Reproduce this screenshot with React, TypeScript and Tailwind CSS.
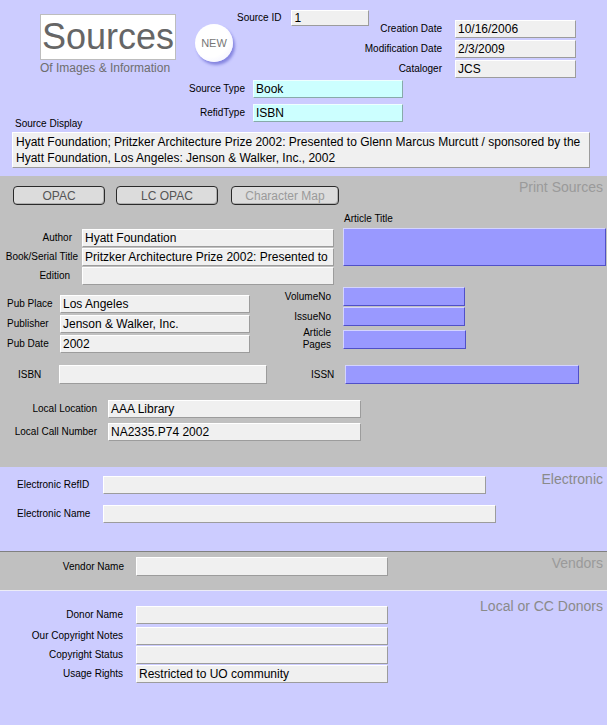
import React from "react";

type Tone = "gray" | "cyan" | "blue";

const toneClass: Record<Tone, string> = {
  gray: "bg-[#f0f0f0] border-t-white border-l-white border-b-[#9c9c9c] border-r-[#9c9c9c]",
  cyan: "bg-[#ccffff] border-t-[#eeffff] border-l-[#eeffff] border-b-[#88aaaa] border-r-[#88aaaa]",
  blue: "bg-[#9999ff] border-t-[#d4d4ff] border-l-[#d4d4ff] border-b-[#5050c8] border-r-[#5050c8]",
};

const Field: React.FC<{ w: string; h?: string; tone?: Tone; value?: string; className?: string }> = ({
  w,
  h = "h-[18px]",
  tone = "gray",
  value,
  className = "",
}) => (
  <div
    className={`${w} ${h} ${toneClass[tone]} border shrink-0 flex items-center px-[2px] text-[12px] leading-none text-black whitespace-nowrap overflow-hidden ${className}`}
  >
    {value}
  </div>
);

const Label: React.FC<{ className?: string; children: React.ReactNode }> = ({ className = "", children }) => (
  <div className={`text-[10px] leading-[12px] text-black whitespace-nowrap shrink-0 ${className}`}>{children}</div>
);

const Button: React.FC<{ w: string; muted?: boolean; children: React.ReactNode }> = ({ w, muted, children }) => (
  <div
    className={`${w} h-[19px] shrink-0 bg-[#dcdcdc] border border-[#2a2a2a] rounded-[4px] shadow-[inset_-1px_-1px_0_#b0b0b0] flex items-center justify-center text-[12px] leading-none ${
      muted ? "text-[#9a9a9a]" : "text-[#555]"
    }`}
  >
    {children}
  </div>
);

const SectionTitle: React.FC<{ className?: string; children: React.ReactNode }> = ({ className = "", children }) => (
  <div className={`ml-auto pr-[4px] text-[14px] leading-[16px] whitespace-nowrap ${className}`}>{children}</div>
);

export default function App() {
  return (
    <div className="w-[607px] h-[725px] flex flex-col bg-[#ccccff] font-['Liberation_Sans',Arial,sans-serif] overflow-hidden">
      {/* header */}
      <div className="h-[176px] shrink-0">
        <div className="h-[80px] flex items-start">
          <div className="w-[176px] pl-[40px] pt-[14px] shrink-0">
            <div className="w-[136px] h-[46px] bg-white border border-[#bdbdbd] flex items-center justify-center text-[36px] leading-none text-[#666]">
              Sources
            </div>
            <div className="mt-[1px] text-[12px] leading-[14px] text-[#6e6e6e] whitespace-nowrap">
              Of Images &amp; Information
            </div>
          </div>
          <div className="ml-[19px] mt-[24px] w-[38px] h-[38px] shrink-0 rounded-full bg-[radial-gradient(circle_at_40%_40%,#ffffff_55%,#ececff_100%)] shadow-[2px_3px_3px_#8585e0] flex items-center justify-center text-[11px] text-[#777]">
            NEW
          </div>
          <div className="flex-1 flex flex-col">
            <div className="flex items-start justify-between">
              <div className="ml-[4px] mt-[10px] flex items-center">
                <Label>Source ID</Label>
                <Field w="w-[78px]" h="h-[16px]" value="1" className="ml-[10px]" />
              </div>
              <div className="mt-[20px] mr-[31px] flex items-center">
                <Label>Creation Date</Label>
                <Field w="w-[121px]" value="10/16/2006" className="ml-[13px]" />
              </div>
            </div>
            <div className="self-end mr-[31px] mt-[2px] flex items-center">
              <Label>Modification Date</Label>
              <Field w="w-[121px]" value="2/3/2009" className="ml-[13px]" />
            </div>
            <div className="self-end mr-[31px] mt-[2px] flex items-center">
              <Label>Cataloger</Label>
              <Field w="w-[121px]" value="JCS" className="ml-[13px]" />
            </div>
          </div>
        </div>
        <div className="flex items-center">
          <Label className="w-[245px] text-right">Source Type</Label>
          <Field w="w-[150px]" tone="cyan" value="Book" className="ml-[8px]" />
        </div>
        <div className="flex items-center mt-[6px]">
          <Label className="w-[245px] text-right">RefidType</Label>
          <Field w="w-[150px]" tone="cyan" value="ISBN" className="ml-[8px]" />
        </div>
        <Label className="-mt-[4px] pl-[15px]">Source Display</Label>
        <div className="ml-[12px] mt-[2px] w-[578px] h-[36px] bg-[#f0f0f0] border border-t-white border-l-white border-b-[#9c9c9c] border-r-[#9c9c9c] px-[3px] pt-[1px] text-[12px] leading-[16px] text-black whitespace-nowrap">
          Hyatt Foundation; Pritzker Architecture Prize 2002: Presented to Glenn Marcus Murcutt / sponsored by the
          <br />
          Hyatt Foundation, Los Angeles: Jenson &amp; Walker, Inc., 2002
        </div>
      </div>

      {/* print sources */}
      <div className="h-[291px] shrink-0 bg-[#c0c0c0]">
        <div className="flex items-start pt-[3px]">
          <Button w="w-[92px] ml-[13px] mt-[7px]">OPAC</Button>
          <Button w="w-[102px] ml-[11px] mt-[7px]">LC OPAC</Button>
          <Button w="w-[108px] ml-[13px] mt-[7px]" muted>
            Character Map
          </Button>
          <SectionTitle className="text-[#9a9a9a]">Print Sources</SectionTitle>
        </div>

        <div className="flex items-start">
          <div className="w-[343px] pt-[24px] shrink-0">
            {[
              { label: "Author", pad: "pr-[6px]", value: "Hyatt Foundation" },
              { label: "Book/Serial Title", pad: "pr-0", value: "Pritzker Architecture Prize 2002: Presented to" },
              { label: "Edition", pad: "pr-[8px]", value: "" },
            ].map((r) => (
              <div key={r.label} className="flex items-center mb-[1px]">
                <Label className={`w-[78px] text-right ${r.pad}`}>{r.label}</Label>
                <Field w="w-[252px]" value={r.value} className="ml-[4px]" />
              </div>
            ))}
          </div>
          <div className="flex flex-col">
            <Label className="mt-[8px] pl-[1px]">Article Title</Label>
            <Field w="w-[263px]" h="h-[38px]" tone="blue" className="mt-[3px]" />
          </div>
        </div>

        <div className="flex items-start">
          <div className="w-[270px] pt-[9px] shrink-0">
            {[
              { label: "Pub Place", value: "Los Angeles" },
              { label: "Publisher", value: "Jenson & Walker, Inc." },
              { label: "Pub Date", value: "2002" },
            ].map((r) => (
              <div key={r.label} className="flex items-center mb-[2px]">
                <Label className="w-[60px] pl-[7px]">{r.label}</Label>
                <Field w="w-[190px]" value={r.value} />
              </div>
            ))}
          </div>
          <div className="pt-[1px]">
            <div className="flex items-center mb-[1px]">
              <Label className="w-[61px] text-right">VolumeNo</Label>
              <Field w="w-[122px]" h="h-[19px]" tone="blue" className="ml-[12px]" />
            </div>
            <div className="flex items-center mb-[1px]">
              <Label className="w-[61px] text-right">IssueNo</Label>
              <Field w="w-[122px]" h="h-[19px]" tone="blue" className="ml-[12px]" />
            </div>
            <div className="flex items-center">
              <Label className="w-[61px] text-right leading-[11px]">
                Article
                <br />
                Pages
              </Label>
              <Field w="w-[123px]" h="h-[19px]" tone="blue" className="ml-[12px]" />
            </div>
          </div>
        </div>

        <div className="mt-[10px] flex items-center">
          <Label className="ml-[18px] w-[41px]">ISBN</Label>
          <Field w="w-[208px]" h="h-[19px]" />
          <Label className="ml-[44px] w-[34px]">ISSN</Label>
          <Field w="w-[234px]" h="h-[19px]" tone="blue" />
        </div>

        <div className="mt-[16px] flex items-center">
          <Label className="w-[97px] text-right">Local Location</Label>
          <Field w="w-[253px]" value="AAA Library" className="ml-[11px]" />
        </div>
        <div className="mt-[5px] flex items-center">
          <Label className="w-[97px] text-right">Local Call Number</Label>
          <Field w="w-[253px]" value="NA2335.P74 2002" className="ml-[11px]" />
        </div>
      </div>

      {/* electronic */}
      <div className="h-[85px] shrink-0 border-b border-[#808080] flex items-start">
        <div className="pt-[9px]">
          <div className="flex items-center">
            <Label className="w-[103px] pl-[17px]">Electronic RefID</Label>
            <Field w="w-[383px]" />
          </div>
          <div className="mt-[11px] flex items-center">
            <Label className="w-[103px] pl-[17px]">Electronic Name</Label>
            <Field w="w-[393px]" />
          </div>
        </div>
        <SectionTitle className="pt-[4px] text-[#8a8a8a]">Electronic</SectionTitle>
      </div>

      {/* vendors */}
      <div className="h-[39px] shrink-0 bg-[#c0c0c0] border-b border-[#ececf6] flex items-start">
        <div className="pt-[5px] flex items-center">
          <Label className="w-[124px] text-right">Vendor Name</Label>
          <Field w="w-[252px]" h="h-[19px]" className="ml-[12px]" />
        </div>
        <SectionTitle className="pt-[3px] text-[#9a9a9a]">Vendors</SectionTitle>
      </div>

      {/* donors */}
      <div className="flex-1 flex items-start">
        <div className="pt-[15px]">
          {[
            { label: "Donor Name", mt: "mt-0", value: "" },
            { label: "Our Copyright Notes", mt: "mt-[3px]", value: "" },
            { label: "Copyright Status", mt: "mt-[1px]", value: "" },
            { label: "Usage Rights", mt: "mt-[1px]", value: "Restricted to UO community" },
          ].map((r) => (
            <div key={r.label} className={`flex items-center ${r.mt}`}>
              <Label className="w-[123px] text-right">{r.label}</Label>
              <Field w="w-[252px]" value={r.value} className="ml-[13px]" />
            </div>
          ))}
        </div>
        <SectionTitle className="pt-[7px] text-[#8a8a8a]">Local or CC Donors</SectionTitle>
      </div>
    </div>
  );
}
